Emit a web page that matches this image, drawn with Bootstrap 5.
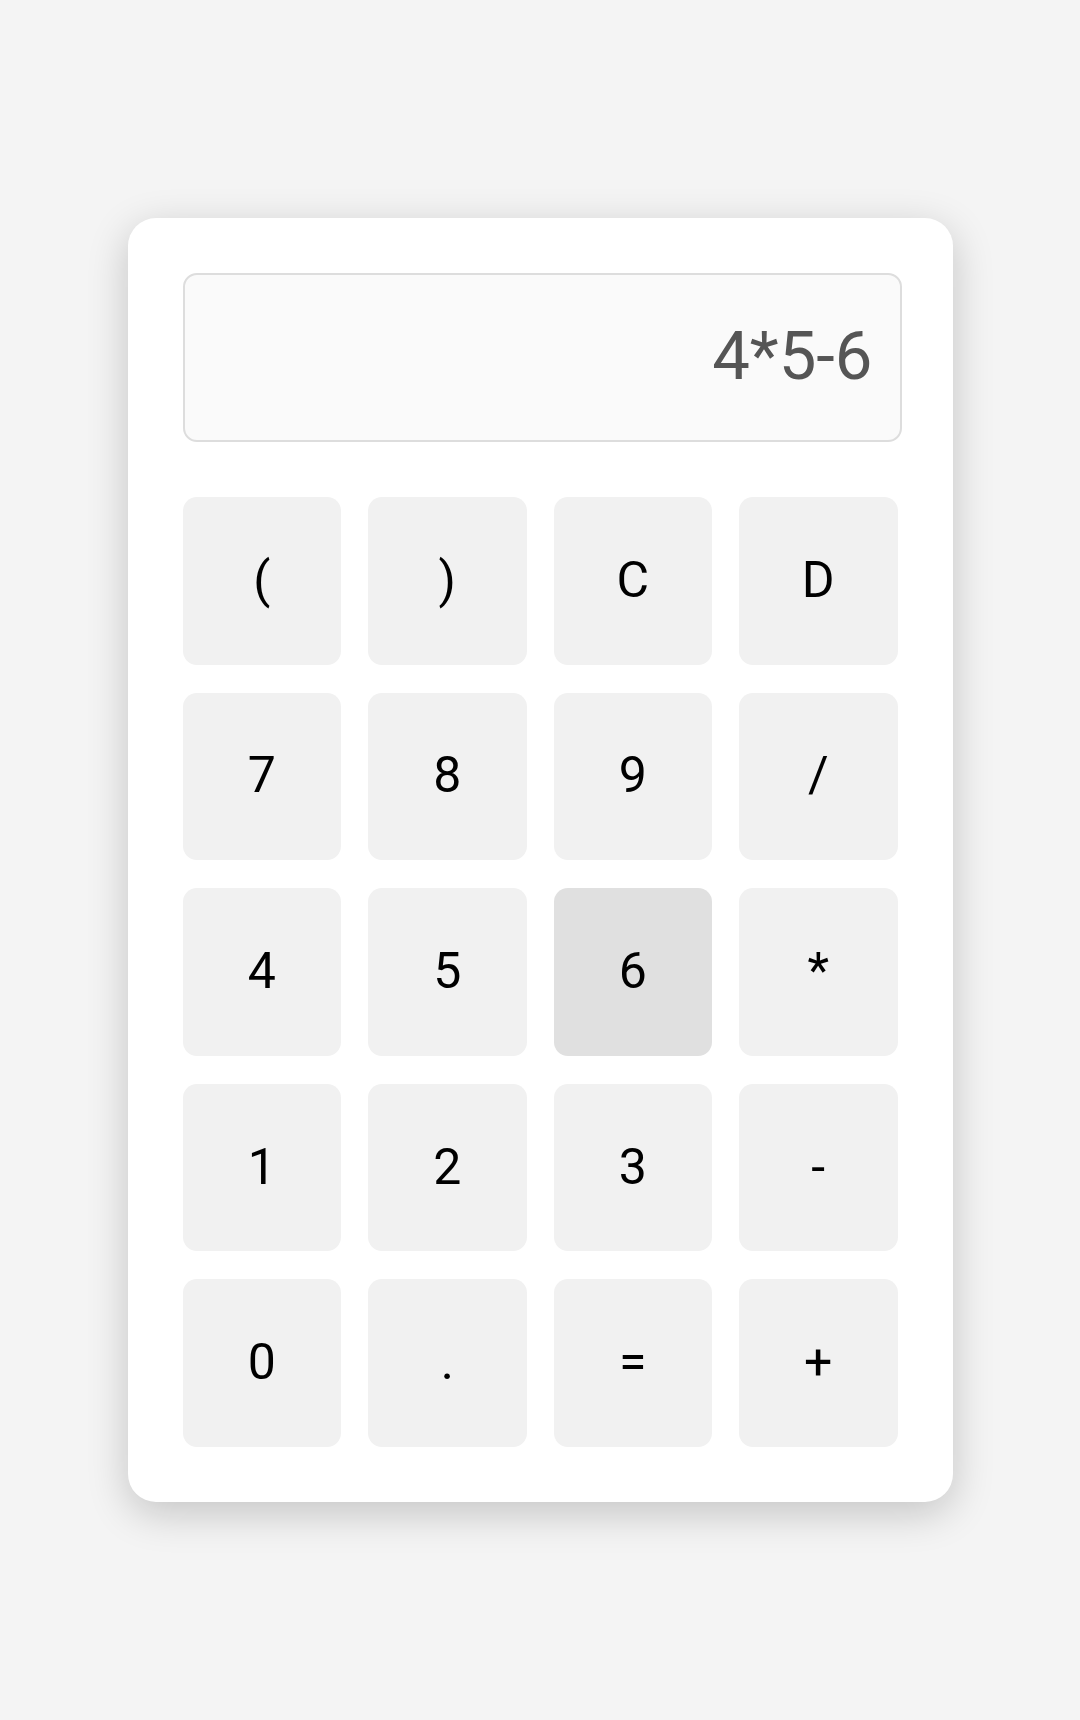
<!DOCTYPE html>
<html lang="en">
<head>
<meta charset="utf-8">
<meta name="viewport" content="width=device-width, initial-scale=1">
<title>Calculator</title>
<link href="https://cdn.jsdelivr.net/npm/bootstrap@5.3.0/dist/css/bootstrap.min.css" rel="stylesheet">
<style>
  body {
    font-family: Roboto, sans-serif;
    background: #f4f4f4;
  }
  .calculator {
    max-width: 825px;
    padding: 55px 51px 55px 55px;
    gap: 55px;
    border-radius: 28px;
    box-shadow: 0 11px 42px rgba(0, 0, 0, .2);
  }
  .readout {
    height: 169px;
    padding: 0 27px 4px;
    font-size: 67px;
    line-height: 80px;
    color: #555;
    background: #fafafa;
    border: 2px solid #ddd;
    border-radius: 14px;
  }
  .readout:focus {
    color: #555;
    background: #fafafa;
    border-color: #bbb;
    box-shadow: none;
  }
  .keypad {
    grid-template-columns: repeat(4, 1fr);
    grid-template-rows: repeat(5, 1fr);
    gap: 28px 27px;
    min-height: 950px;
    margin-right: 4px;
  }
  .key {
    --bs-btn-font-size: 50px;
    --bs-btn-line-height: 60px;
    --bs-btn-color: #000;
    --bs-btn-bg: #f1f1f1;
    --bs-btn-border-width: 0;
    --bs-btn-border-radius: 14px;
    --bs-btn-hover-color: #000;
    --bs-btn-hover-bg: #e0e0e0;
    --bs-btn-active-color: #000;
    --bs-btn-active-bg: #e0e0e0;
    padding: 0 0 2px;
  }
</style>
<script src="https://cdn.jsdelivr.net/npm/bootstrap@5.3.0/dist/js/bootstrap.bundle.min.js" defer></script>
</head>
<body class="d-flex justify-content-center align-items-center min-vh-100">
<main class="calculator w-100 d-flex flex-column bg-white">
  <input class="readout form-control text-end" type="text" value="4*5-6" aria-label="Expression" readonly>
  <div class="keypad d-grid">
    <button type="button" class="btn key">(</button>
    <button type="button" class="btn key">)</button>
    <button type="button" class="btn key">C</button>
    <button type="button" class="btn key">D</button>
    <button type="button" class="btn key">7</button>
    <button type="button" class="btn key">8</button>
    <button type="button" class="btn key">9</button>
    <button type="button" class="btn key">/</button>
    <button type="button" class="btn key">4</button>
    <button type="button" class="btn key">5</button>
    <button type="button" class="btn key active">6</button>
    <button type="button" class="btn key">*</button>
    <button type="button" class="btn key">1</button>
    <button type="button" class="btn key">2</button>
    <button type="button" class="btn key">3</button>
    <button type="button" class="btn key">-</button>
    <button type="button" class="btn key">0</button>
    <button type="button" class="btn key">.</button>
    <button type="button" class="btn key">=</button>
    <button type="button" class="btn key">+</button>
  </div>
</main>
</body>
</html>
